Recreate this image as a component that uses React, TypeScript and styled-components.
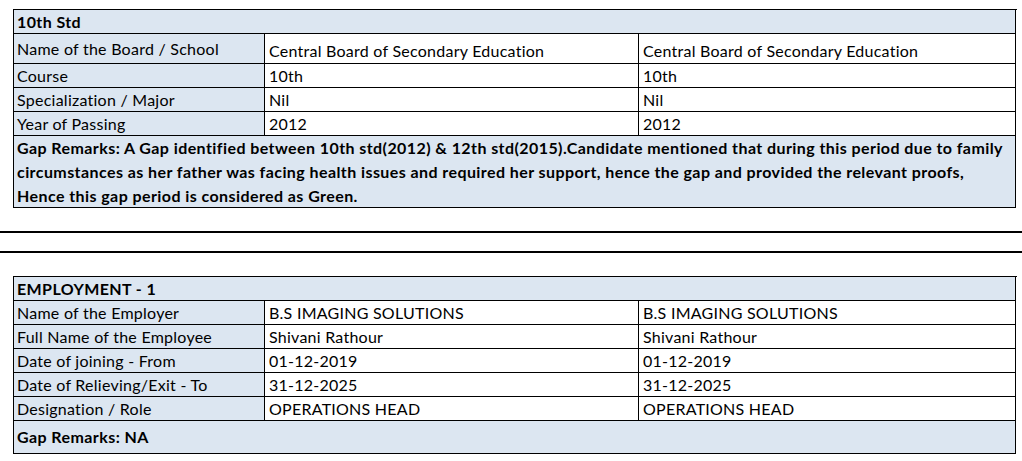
import styled, { createGlobalStyle } from "styled-components";

const GlobalStyle = createGlobalStyle`
  body {
    margin: 0;
    background: #ffffff;
    color: #000000;
    font-family: "Lato", "Open Sans", sans-serif;
  }
`;

interface Row {
  label: string;
  values: [string, string];
  height?: number;
  tall?: boolean;
}

const education: Row[] = [
  {
    label: "Name of the Board / School",
    values: ["Central Board of Secondary Education", "Central Board of Secondary Education"],
    height: 30,
    tall: true,
  },
  { label: "Course", values: ["10th", "10th"] },
  { label: "Specialization / Major", values: ["Nil", "Nil"] },
  { label: "Year of Passing", values: ["2012", "2012"] },
];

const employment: Row[] = [
  { label: "Name of the Employer", values: ["B.S IMAGING SOLUTIONS", "B.S IMAGING SOLUTIONS"] },
  { label: "Full Name of the Employee", values: ["Shivani Rathour", "Shivani Rathour"] },
  { label: "Date of joining - From", values: ["01-12-2019", "01-12-2019"] },
  { label: "Date of Relieving/Exit - To", values: ["31-12-2025", "31-12-2025"] },
  { label: "Designation / Role", values: ["OPERATIONS HEAD", "OPERATIONS HEAD"] },
];

const gapLines = [
  "Gap Remarks: A Gap identified between 10th std(2012) & 12th std(2015).Candidate mentioned that during this period due to family",
  "circumstances as her father was facing health issues and required her support, hence the gap and provided the relevant proofs,",
  "Hence this gap period is considered as Green.",
];

const Section = ({
  title,
  rows,
  remarks,
  remarksHeight,
  top,
}: {
  title: string;
  rows: Row[];
  remarks: string[];
  remarksHeight: number;
  top: number;
}) => (
  <Sheet $top={top}>
    <HeadCell>{title}</HeadCell>
    {rows.map((row) => (
      <>
        <LabelCell key={row.label} $h={row.height ?? 24}>
          {row.label}
        </LabelCell>
        {row.values.map((v, i) => (
          <ValueCell key={row.label + i} $h={row.height ?? 24} $bottom={row.tall}>
            {v}
          </ValueCell>
        ))}
      </>
    ))}
    <RemarksCell $h={remarksHeight}>
      {remarks.map((line) => (
        <RemarkLine key={line}>{line}</RemarkLine>
      ))}
    </RemarksCell>
  </Sheet>
);

export default function App() {
  return (
    <>
      <GlobalStyle />
      <Page>
        <Section title="10th Std" rows={education} remarks={gapLines} remarksHeight={72} top={9} />
        <Rule $top={23} />
        <Rule $top={18} />
        <Section
          title="EMPLOYMENT - 1"
          rows={employment}
          remarks={["Gap Remarks: NA"]}
          remarksHeight={33}
          top={23}
        />
      </Page>
    </>
  );
}

const Page = styled.div`
  width: 1022px;
  padding-bottom: 8px;
`;

const Sheet = styled.div<{ $top: number }>`
  display: grid;
  grid-template-columns: 251px 374px 377px;
  width: 1003px;
  margin: ${(p) => p.$top}px 0 0 13px;
  border-top: 1px solid #000;
  border-left: 1px solid #000;
  font-size: 16px;
  letter-spacing: 0.25px;
  line-height: 24px;
`;

const Cell = styled.div<{ $h?: number }>`
  box-sizing: border-box;
  height: ${(p) => p.$h ?? 24}px;
  border-right: 1px solid #000;
  border-bottom: 1px solid #000;
  padding: 0 3px;
  white-space: nowrap;
  overflow: hidden;
  display: flex;
  align-items: center;
`;

const HeadCell = styled(Cell)`
  grid-column: 1 / -1;
  background: #dce6f1;
  font-weight: 700;
  letter-spacing: 0.4px;
`;

const LabelCell = styled(Cell)`
  background: #dce6f1;
`;

const ValueCell = styled(Cell)<{ $bottom?: boolean }>`
  background: #ffffff;
  padding-left: 4px;
  align-items: ${(p) => (p.$bottom ? "flex-end" : "center")};
`;

const RemarksCell = styled(Cell)`
  grid-column: 1 / -1;
  background: #dce6f1;
  font-weight: 700;
  letter-spacing: 0.42px;
  flex-direction: column;
  align-items: flex-start;
  justify-content: center;
`;

const RemarkLine = styled.div`
  height: 24px;
`;

const Rule = styled.div<{ $top: number }>`
  margin-top: ${(p) => p.$top}px;
  height: 2px;
  background: #000;
`;
